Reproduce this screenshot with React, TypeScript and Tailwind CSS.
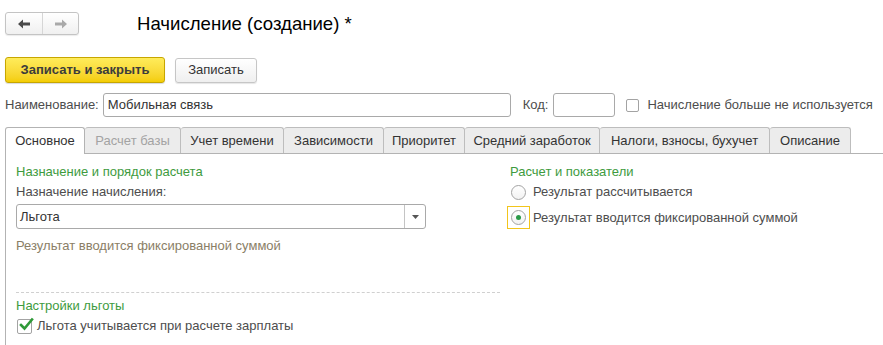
import React from 'react';

const tabs = [
  { title: 'Основное', w: 'w-[80px]', active: true },
  { title: 'Расчет базы', w: 'w-[96px]', disabled: true },
  { title: 'Учет времени', w: 'w-[103px]' },
  { title: 'Зависимости', w: 'w-[100px]' },
  { title: 'Приоритет', w: 'w-[81px]' },
  { title: 'Средний заработок', w: 'w-[135px]' },
  { title: 'Налоги, взносы, бухучет', w: 'w-[170px]' },
  { title: 'Описание', w: 'w-[81px]' },
];

const Radio: React.FC<{ checked?: boolean }> = ({ checked }) => (
  <span className="w-[15px] h-[15px] rounded-full border border-[#a3a3a3] bg-gradient-to-b from-white to-[#f2f2f2] flex items-center justify-center shrink-0">
    {checked && <span className="w-[5px] h-[5px] rounded-full bg-[#2a9a48]" />}
  </span>
);

const App: React.FC = () => {
  return (
    <div className="w-[883px] h-[345px] bg-white overflow-hidden text-[13px] leading-[16px] text-[#4d4d4d] font-['Liberation_Sans',Arial,sans-serif]">
      {/* Header */}
      <div className="flex items-center pt-[12px] pl-[5px]">
        <div className="flex w-[74px] h-[23px] border border-[#c4c4c4] rounded-[3px] bg-gradient-to-b from-white to-[#f0f0f0] shadow-[0_1px_1px_rgba(0,0,0,0.08)]">
          <div className="w-[37px] flex items-center justify-center border-r border-[#d6d6d6]">
            <svg width="12" height="10" viewBox="0 0 12 10">
              <path d="M0 5 L5 0.5 L5 3.5 L12 3.5 L12 6.5 L5 6.5 L5 9.5 Z" fill="#4a4a4a" />
            </svg>
          </div>
          <div className="flex-1 flex items-center justify-center">
            <svg width="12" height="10" viewBox="0 0 12 10">
              <path d="M12 5 L7 0.5 L7 3.5 L0 3.5 L0 6.5 L7 6.5 L7 9.5 Z" fill="#a9a9a9" />
            </svg>
          </div>
        </div>
        <div className="ml-[58px] text-[18.6px] leading-[22px] text-black">Начисление (создание) *</div>
      </div>

      {/* Command bar */}
      <div className="flex items-center pl-[5px] mt-[22px] gap-[10px]">
        <button className="h-[26px] w-[160px] rounded-[3px] border border-[#c7a600] bg-gradient-to-b from-[#ffec5a] to-[#f4cd00] font-bold text-[#3c3c3c] shadow-[0_1px_1px_rgba(0,0,0,0.15)]">
          Записать и закрыть
        </button>
        <button className="h-[25px] w-[82px] rounded-[3px] border border-[#c6c6c6] bg-gradient-to-b from-white to-[#efefef] text-[#333] shadow-[0_1px_1px_rgba(0,0,0,0.1)]">
          Записать
        </button>
      </div>

      {/* Name row */}
      <div className="flex items-center pl-[5px] mt-[10px] h-[24px]">
        <span>Наименование:</span>
        <div className="ml-[4px] w-[408px] h-[24px] border border-[#a9a9a9] rounded-[3px] flex items-center px-[4px] text-[#333]">
          Мобильная связь
        </div>
        <span className="ml-[12px]">Код:</span>
        <div className="ml-[5px] w-[62px] h-[24px] border border-[#a9a9a9] rounded-[3px]" />
        <span className="ml-[11px] w-[13px] h-[13px] border border-[#a3a3a3] rounded-[2px] bg-white" />
        <span className="ml-[8px]">Начисление больше не используется</span>
      </div>

      {/* Tabs */}
      <div className="mt-[10px] ml-[5px] flex items-end border-b border-[#b3b3b3] h-[27px]">
        {tabs.map((t) => (
          <div
            key={t.title}
            className={
              t.active
                ? `${t.w} h-[27px] -mb-px bg-white border border-b-0 border-[#b3b3b3] rounded-t-[3px] flex items-center justify-center text-[#333]`
                : `${t.w} h-[26px] bg-[#ececec] border border-l-0 border-b-0 border-[#bdbdbd] rounded-t-[3px] flex items-center justify-center ${t.disabled ? 'text-[#a3a3a3]' : 'text-[#333]'}`
            }
          >
            {t.title}
          </div>
        ))}
      </div>

      {/* Content */}
      <div className="ml-[5px] border-l border-[#b3b3b3] h-[200px] flex pl-[10px] pt-[10px]">
        <div className="w-[484px] flex flex-col">
          <div className="text-[#3e9b3e]">Назначение и порядок расчета</div>
          <div className="mt-[4px]">Назначение начисления:</div>
          <div className="mt-[4px] w-[410px] h-[25px] border border-[#a9a9a9] rounded-[3px] flex items-center">
            <span className="flex-1 px-[3px] text-[#333]">Льгота</span>
            <span className="w-[21px] h-full border-l border-[#c4c4c4] flex items-center justify-center">
              <svg width="7" height="4" viewBox="0 0 7 4">
                <path d="M0 0 L7 0 L3.5 4 Z" fill="#555" />
              </svg>
            </span>
          </div>
          <div className="mt-[9px] text-[#8a7e66]">Результат вводится фиксированной суммой</div>
          <div className="mt-[38px] border-t border-dashed border-[#d0d0d0]" />
          <div className="mt-[5px] text-[#3e9b3e]">Настройки льготы</div>
          <div className="mt-[4px] flex items-center">
            <span className="relative ml-[1px] w-[15px] h-[15px] border border-[#a3a3a3] rounded-[2px] bg-white">
              <svg className="absolute -top-[3px] left-[1px]" width="15" height="15" viewBox="0 0 15 15">
                <path d="M2 8 L5.5 11.5 L13 2.5" stroke="#2f9a38" strokeWidth="2.6" fill="none" strokeLinecap="square" />
              </svg>
            </span>
            <span className="ml-[5px]">Льгота учитывается при расчете зарплаты</span>
          </div>
        </div>
        <div className="ml-[10px] flex flex-col">
          <div className="text-[#3e9b3e]">Расчет и показатели</div>
          <div className="mt-[4px] flex items-center">
            <span className="ml-[1px] flex">
              <Radio />
            </span>
            <span className="ml-[7px]">Результат рассчитывается</span>
          </div>
          <div className="mt-[6px] flex items-center">
            <span className="-ml-[3px] w-[23px] h-[23px] border border-[#f2c51c] flex items-center justify-center">
              <Radio checked />
            </span>
            <span className="ml-[3px]">Результат вводится фиксированной суммой</span>
          </div>
        </div>
      </div>
    </div>
  );
};

export default App;
